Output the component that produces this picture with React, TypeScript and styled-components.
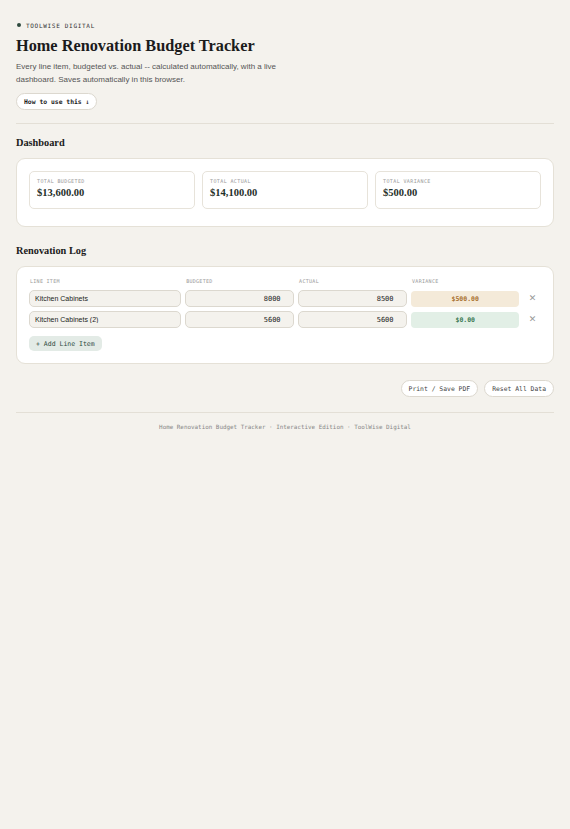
import React from 'react';
import styled, { createGlobalStyle } from 'styled-components';

const GlobalStyle = createGlobalStyle`
  html, body {
    margin: 0;
    padding: 0;
    background: #f4f2ed;
  }
  body {
    font-family: "Liberation Sans", Arial, sans-serif;
    color: #1c1c1c;
  }
  * { box-sizing: border-box; }
`;

const mono = `"DejaVu Sans Mono", "Liberation Mono", monospace`;
const serif = `"Liberation Serif", "Times New Roman", serif`;

const Page = styled.div`
  min-height: 829px;
  padding: 20px 16px;
`;

const Kicker = styled.div`
  display: flex;
  align-items: center;
  gap: 5px;
  height: 10px;
  padding-left: 1px;
  font-family: ${mono};
  font-size: 6px;
  letter-spacing: 0.7px;
  color: #333;
`;

const Dot = styled.span`
  width: 4px;
  height: 4px;
  border-radius: 50%;
  background: #2d4a3e;
`;

const Title = styled.h1`
  margin: 6px 0 0;
  font-family: ${serif};
  font-size: 16.3px;
  line-height: 20px;
  font-weight: bold;
  color: #1b1b1b;
`;

const Lead = styled.p`
  margin: 3.5px 0 0;
  max-width: 290px;
  font-size: 8px;
  line-height: 13px;
  color: #555;
`;

const PillButton = styled.button<{ $bold?: boolean }>`
  height: 17px;
  padding: 0 7px;
  border: 1px solid #dcd8cf;
  border-radius: 999px;
  background: #fff;
  font-family: ${mono};
  font-size: 6.4px;
  font-weight: ${(p) => (p.$bold ? 'bold' : 'normal')};
  color: ${(p) => (p.$bold ? '#1c1c1c' : '#444')};
  cursor: pointer;
`;

const HelpButton = styled(PillButton)`
  margin-top: 7.5px;
`;

const Rule = styled.hr`
  margin: 13px 0 0;
  border: none;
  border-top: 1px solid #e3dfd6;
`;

const SectionTitle = styled.h2<{ $gap: number }>`
  margin: ${(p) => p.$gap}px 0 0;
  font-family: ${serif};
  font-size: 10.3px;
  line-height: 14px;
  font-weight: bold;
  color: #1b1b1b;
`;

const Panel = styled.div<{ $pad: string }>`
  margin-top: 8px;
  background: #fff;
  border: 1.5px solid #e5e1d7;
  border-radius: 9px;
  padding: ${(p) => p.$pad};
`;

const StatGrid = styled.div`
  display: grid;
  grid-template-columns: repeat(3, 1fr);
  gap: 7px;
`;

const StatCard = styled.div`
  border: 1px solid #e7e3da;
  border-radius: 5px;
  padding: 5px 7px 6px;
  height: 38px;
`;

const StatLabel = styled.div`
  font-family: ${mono};
  font-size: 5px;
  line-height: 8px;
  letter-spacing: 0.4px;
  color: #999;
`;

const StatValue = styled.div`
  margin-top: 1px;
  font-family: ${serif};
  font-size: 10.5px;
  line-height: 14px;
  font-weight: bold;
  color: #1f3029;
`;

const LogGrid = styled.div`
  display: grid;
  grid-template-columns: 151fr 108fr 108fr 108fr 17px;
  column-gap: 4.5px;
  row-gap: 4px;
  align-items: center;
`;

const HeadCell = styled.div`
  font-family: ${mono};
  font-size: 5px;
  line-height: 8px;
  letter-spacing: 0.3px;
  color: #999;
  padding-left: 1px;
  margin-bottom: 1px;
`;

const Field = styled.input<{ $num?: boolean }>`
  width: 100%;
  height: 17px;
  border: 1px solid #dcd8cf;
  border-radius: 5px;
  background: #f4f2ed;
  padding: 0 ${(p) => (p.$num ? '12px' : '5px')};
  text-align: ${(p) => (p.$num ? 'right' : 'left')};
  font-family: ${(p) => (p.$num ? mono : `"Liberation Sans", Arial, sans-serif`)};
  font-size: 7px;
  color: #222;
  outline: none;
`;

const Variance = styled.div<{ $tone: 'over' | 'even' }>`
  height: 16px;
  border-radius: 4px;
  display: flex;
  align-items: center;
  justify-content: center;
  font-family: ${mono};
  font-size: 6.5px;
  font-weight: bold;
  background: ${(p) => (p.$tone === 'over' ? '#f4ead9' : '#e2efe6')};
  color: ${(p) => (p.$tone === 'over' ? '#a8712e' : '#3b7a55')};
`;

const RemoveButton = styled.button`
  border: none;
  background: none;
  padding: 0;
  font-size: 9px;
  line-height: 1;
  color: #999;
  font-family: "DejaVu Sans", sans-serif;
  cursor: pointer;
`;

const AddButton = styled.button`
  margin-top: 8px;
  height: 15px;
  padding: 0 7px;
  border: none;
  border-radius: 5px;
  background: #e3ebe6;
  color: #2d4a3e;
  font-family: ${mono};
  font-size: 6.5px;
  cursor: pointer;
`;

const Actions = styled.div`
  margin-top: 16px;
  display: flex;
  justify-content: flex-end;
  gap: 6px;
`;

const Footer = styled.footer`
  margin-top: 15px;
  border-top: 1px solid #e3dfd6;
  padding-top: 10px;
  text-align: center;
  font-family: ${mono};
  font-size: 5.9px;
  line-height: 9px;
  color: #888;
`;

const rows = [
  { name: 'Kitchen Cabinets', budget: '8000', actual: '8500', variance: '$500.00', tone: 'over' as const },
  { name: 'Kitchen Cabinets (2)', budget: '5600', actual: '5600', variance: '$0.00', tone: 'even' as const },
];

export default function App() {
  return (
    <Page>
      <GlobalStyle />
      <Kicker>
        <Dot />
        TOOLWISE DIGITAL
      </Kicker>
      <Title>Home Renovation Budget Tracker</Title>
      <Lead>
        Every line item, budgeted vs. actual -- calculated automatically, with a live dashboard. Saves automatically in this browser.
      </Lead>
      <HelpButton $bold>How to use this ↓</HelpButton>
      <Rule />

      <SectionTitle $gap={12}>Dashboard</SectionTitle>
      <Panel $pad="12px 12px 17px">
        <StatGrid>
          <StatCard>
            <StatLabel>TOTAL BUDGETED</StatLabel>
            <StatValue>$13,600.00</StatValue>
          </StatCard>
          <StatCard>
            <StatLabel>TOTAL ACTUAL</StatLabel>
            <StatValue>$14,100.00</StatValue>
          </StatCard>
          <StatCard>
            <StatLabel>TOTAL VARIANCE</StatLabel>
            <StatValue>$500.00</StatValue>
          </StatCard>
        </StatGrid>
      </Panel>

      <SectionTitle $gap={17}>Renovation Log</SectionTitle>
      <Panel $pad="10px 12px 12px">
        <LogGrid>
          <HeadCell>LINE ITEM</HeadCell>
          <HeadCell>BUDGETED</HeadCell>
          <HeadCell>ACTUAL</HeadCell>
          <HeadCell>VARIANCE</HeadCell>
          <span />
          {rows.map((r) => (
            <React.Fragment key={r.name}>
              <Field defaultValue={r.name} />
              <Field $num defaultValue={r.budget} />
              <Field $num defaultValue={r.actual} />
              <Variance $tone={r.tone}>{r.variance}</Variance>
              <RemoveButton aria-label="Remove">✕</RemoveButton>
            </React.Fragment>
          ))}
        </LogGrid>
        <AddButton>+ Add Line Item</AddButton>
      </Panel>

      <Actions>
        <PillButton>Print / Save PDF</PillButton>
        <PillButton>Reset All Data</PillButton>
      </Actions>

      <Footer>Home Renovation Budget Tracker · Interactive Edition · ToolWise Digital</Footer>
    </Page>
  );
}
